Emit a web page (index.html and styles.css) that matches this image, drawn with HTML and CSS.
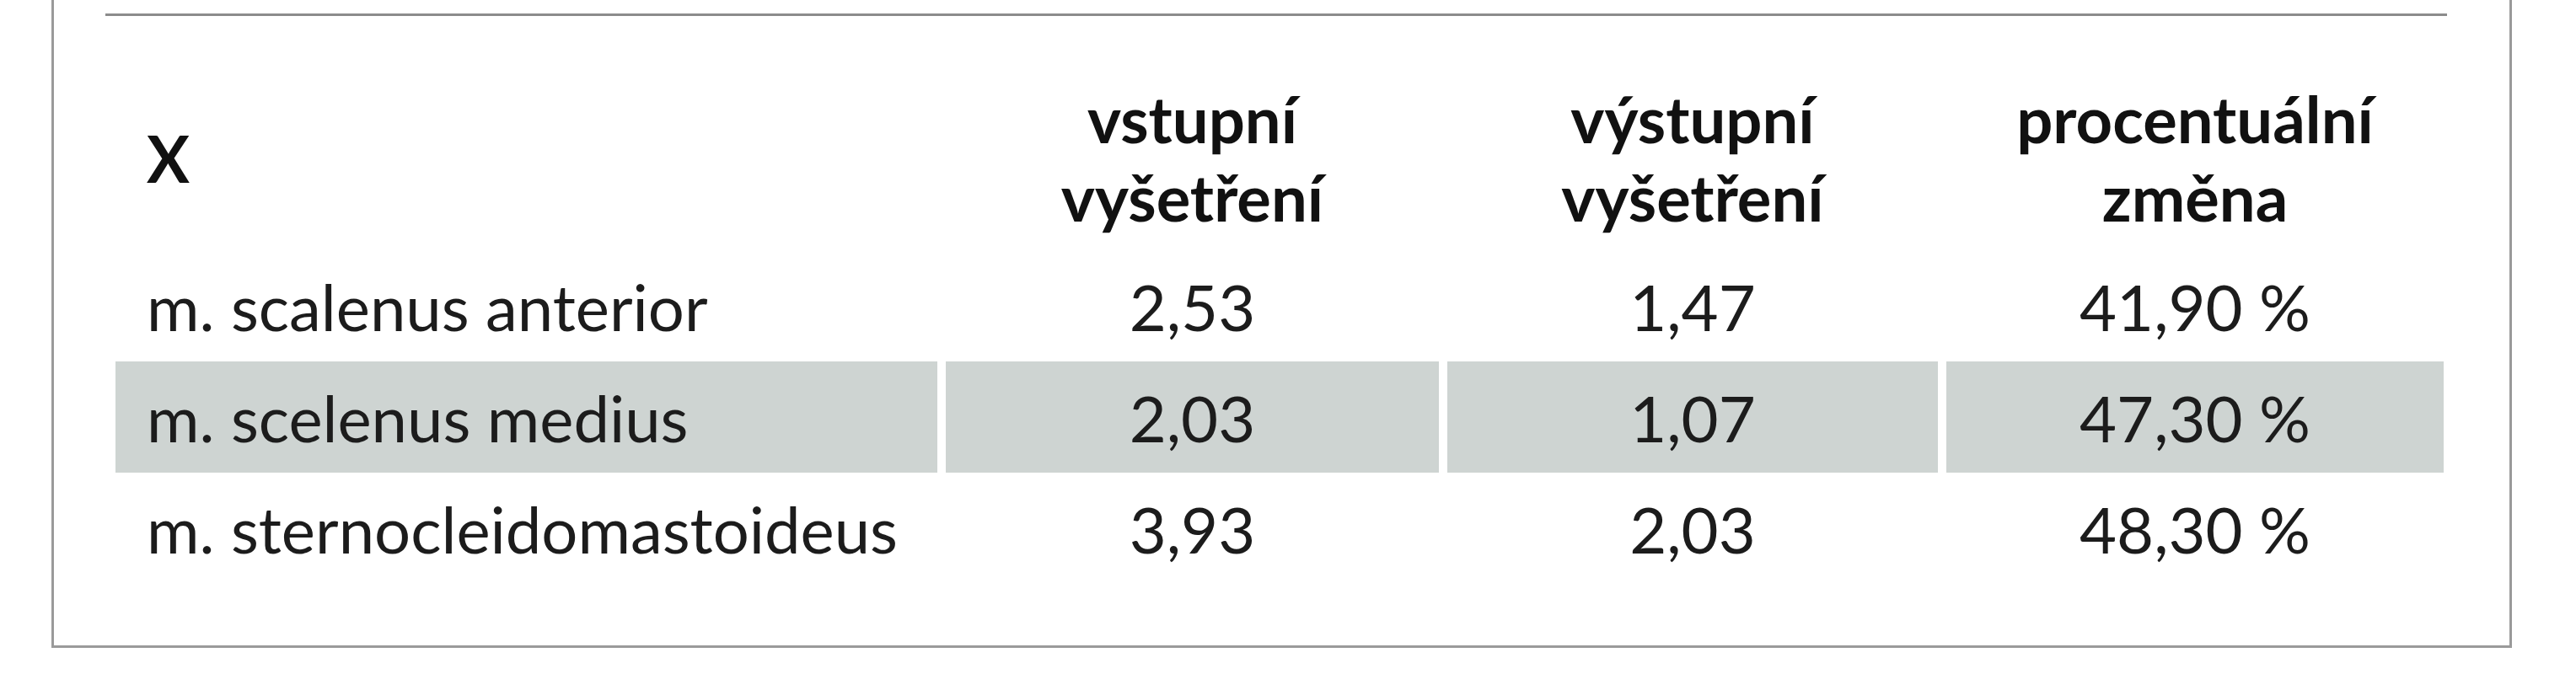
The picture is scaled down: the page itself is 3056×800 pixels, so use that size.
FILE: index.html
```html
<!DOCTYPE html>
<html lang="cs">
<head>
<meta charset="utf-8">
<title>Tabulka</title>
<link rel="stylesheet" href="styles.css">
</head>
<body>
<div class="frame">
  <div class="rule"></div>
  <table class="data">
    <colgroup>
      <col class="c-name">
      <col class="c-in">
      <col class="c-out">
      <col class="c-pct">
    </colgroup>
    <thead>
      <tr>
        <th class="name">X</th>
        <th>vstupní<br>vyšetření</th>
        <th>výstupní<br>vyšetření</th>
        <th>procentuální<br>změna</th>
      </tr>
    </thead>
    <tbody>
      <tr>
        <td class="name">m. scalenus anterior</td>
        <td>2,53</td>
        <td>1,47</td>
        <td>41,90 %</td>
      </tr>
      <tr class="shade">
        <td class="name">m. scelenus medius</td>
        <td>2,03</td>
        <td>1,07</td>
        <td>47,30 %</td>
      </tr>
      <tr>
        <td class="name">m. sternocleidomastoideus</td>
        <td>3,93</td>
        <td>2,03</td>
        <td>48,30 %</td>
      </tr>
    </tbody>
  </table>
</div>
</body>
</html>
```

FILE: styles.css
```css
html, body {
  margin: 0;
  padding: 0;
  background: #ffffff;
}

body {
  font-family: Lato, "Liberation Sans", sans-serif;
  color: #1c1c1c;
}

.frame {
  margin-left: 61px;
  box-sizing: content-box;
  padding: 16px 74px 73px 61px;
  width: 2778px;
  border-left: 3px solid #9a9a9a;
  border-right: 3px solid #9a9a9a;
  border-bottom: 3px solid #9a9a9a;
}

.rule {
  border-top: 3px solid #8c8c8c;
}

.data {
  table-layout: fixed;
  width: 2782px;
  margin-left: 2px;
  border-collapse: separate;
  border-spacing: 10px 0;
  font-size: 76px;
  line-height: 93px;
}

.c-name { width: 975px; }
.c-in { width: 585px; }
.c-out { width: 582px; }
.c-pct { width: 590px; }

.data th {
  font-weight: 700;
  color: #111111;
  text-align: center;
  vertical-align: middle;
  padding: 75px 0 17px;
}

.data td {
  font-weight: 400;
  text-align: center;
  vertical-align: middle;
  padding: 20px 0 19px;
  white-space: nowrap;
}

.data .name {
  text-align: left;
  padding-left: 37px;
}

.shade td {
  background: #ced4d2;
}
```
